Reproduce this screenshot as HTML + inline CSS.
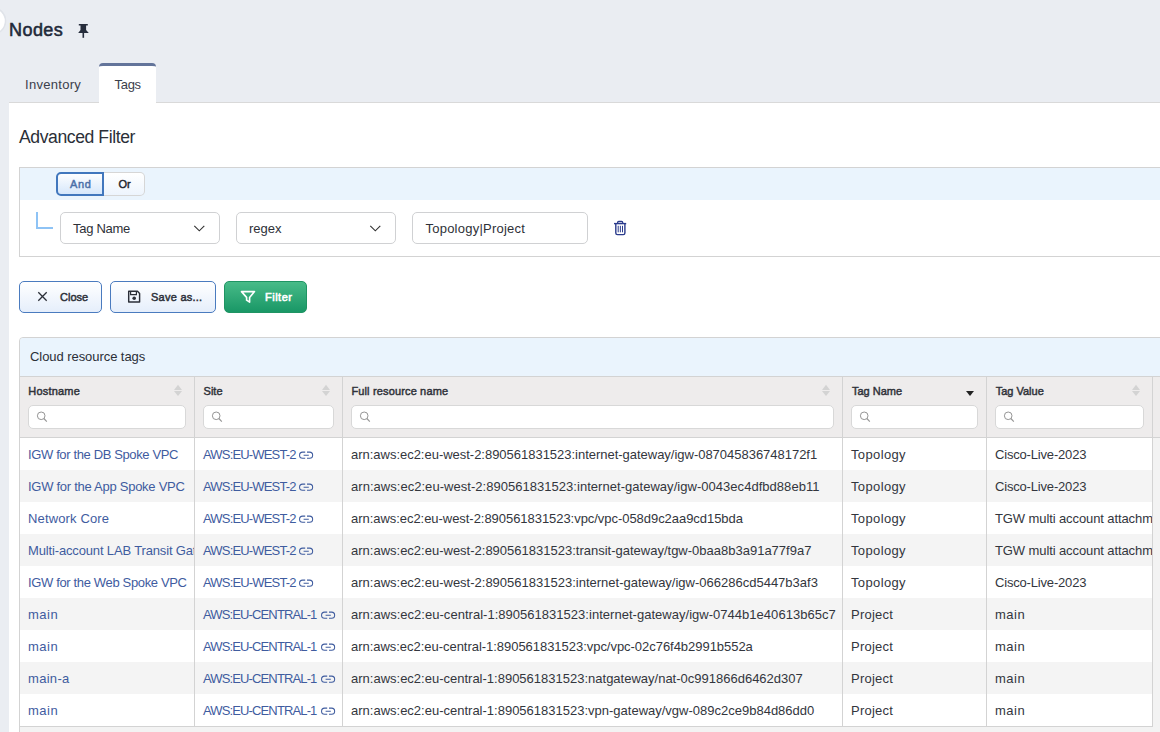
<!DOCTYPE html>
<html><head><meta charset="utf-8">
<style>
*{box-sizing:border-box;margin:0;padding:0}
html,body{width:1160px;height:732px;overflow:hidden;background:#eaedf2;font-family:"Liberation Sans",sans-serif;color:#333}
.abs{position:absolute}
.t{position:absolute;white-space:pre;line-height:normal}
#title{left:9px;top:20px;font-size:18px;font-weight:400;color:#222939;letter-spacing:0.45px;-webkit-text-stroke:0.55px #222939}
#tab2{left:99px;top:63px;width:57px;height:40px;background:#fff;border-top:3px solid #63749a;border-radius:4px 4px 0 0}
#panel{left:9px;top:102px;width:1151px;height:630px;background:#fff;border-top:1px solid #d9d9d9}
#fbox{left:19px;top:167px;width:1160px;height:90px;border:1px solid #d3d3d3;background:#fff}
#fhead{left:20px;top:168px;width:1140px;height:32px;background:#eaf4fd}
#and{left:56px;top:172px;width:48px;height:24px;border:2px solid #4177bd;border-radius:5px 0 0 5px;background:linear-gradient(#fdfeff,#d6e7fb)}
#or{left:104px;top:172px;width:41px;height:24px;border:1px solid #d6d6d6;border-left:none;border-radius:0 5px 5px 0;background:linear-gradient(#ffffff,#edf4fd)}
.seg{font-size:11px;font-weight:400;-webkit-text-stroke:0.45px currentColor}
#conn{left:36px;top:212px;width:17px;height:17px;border-left:2px solid #8ec3f5;border-bottom:2px solid #8ec3f5}
.sel{height:32px;top:212px;border:1px solid #d0d1d3;border-radius:5px;background:#fff}
.ft{font-size:13px;color:#2e3138}
.btn{top:281px;height:32px;border:1px solid #4a7bbf;border-radius:5px;background:linear-gradient(#ffffff,#e5eefb)}
.bt{font-size:11px;font-weight:400;-webkit-text-stroke:0.45px currentColor;color:#2b2f38;top:291px}
#bfilter{border-color:#1f9463;background:linear-gradient(#48bb88,#199766)}
#tpanel{left:19px;top:337px;width:1150px;height:400px;border:1px solid #d3d3d3;border-radius:4px 0 0 0;background:#f3f3f3;overflow:hidden}
#thead{left:0;top:0;width:100%;height:39px;background:#eaf4fd;border-bottom:1px solid #d3d3d3}
table{position:absolute;left:-1px;top:39px;border-collapse:collapse;table-layout:fixed;width:1155px}
th{background:#eeecec;height:60px;border:1px solid #d3d3d3;border-top:none;padding:0}
td{height:32px;border-left:1px solid #d3d3d3;border-right:1px solid #d3d3d3;font-size:13px;color:#33363d;padding:0 0 0 8px;white-space:nowrap;overflow:hidden;background:#fff;vertical-align:middle}
tr.g td{background:#f4f4f4}
tr.r1 td{height:33px;padding-top:1px}
td a{color:#3f5c9f;text-decoration:none}
td.x{background:#f3f3f3 !important;border-right:none}
.hl{font-size:11px;font-weight:400;-webkit-text-stroke:0.45px #2f3239;color:#2f3239;top:385px}
.sb{top:405px;height:24px;background:#fff;border:1px solid #d8d8d8;border-radius:5px}
</style></head><body>
<svg class="abs" style="left:0;top:0" width="10" height="40" viewBox="0 0 10 40"><circle cx="-7.7" cy="20.9" r="13.2" fill="none" stroke="rgba(40,50,70,0.05)" stroke-width="1.6"/><circle cx="-7.7" cy="20.9" r="12.4" fill="#fff"/></svg>
<div id="title" class="t">Nodes</div>
<svg class="abs" style="left:70px;top:18px" width="24" height="24" viewBox="70 18 24 24"><path d="M78.8 23.9H87.8V25.4H86.1V30L88.8 32.9H78.2L80.5 30V25.4H78.8Z" fill="#262d3c"/><rect x="82.5" y="32.5" width="1.6" height="5.3" fill="#262d3c"/></svg>
<div class="t" style="left:25px;top:77px;font-size:13px;color:#3b404c;letter-spacing:0.3px">Inventory</div>
<div id="panel" class="abs"></div>
<div id="tab2" class="abs"></div>
<div class="t" style="left:114.5px;top:77px;font-size:13px;color:#3b404c;letter-spacing:-0.3px">Tags</div>
<div class="t" style="left:19px;top:126.5px;font-size:17.6px;color:#2b2f38;letter-spacing:-0.42px">Advanced Filter</div>

<div id="fbox" class="abs"></div>
<div id="fhead" class="abs"></div>
<div id="and" class="abs"></div>
<div id="or" class="abs"></div>
<div class="t seg" style="left:70px;top:178px;color:#4a6fa8;letter-spacing:0.6px">And</div>
<div class="t seg" style="left:118.5px;top:178px;color:#23262d">Or</div>
<div id="conn" class="abs"></div>
<div class="abs sel" style="left:60px;width:160px"></div>
<div class="abs sel" style="left:236px;width:160px"></div>
<div class="abs sel" style="left:412px;width:176px"></div>
<div class="t ft" style="left:73px;top:221px;letter-spacing:-0.29px">Tag Name</div>
<div class="t ft" style="left:249px;top:221px">regex</div>
<div class="t ft" style="left:425.5px;top:221px;letter-spacing:0.23px">Topology|Project</div>
<svg class="abs" style="left:180px;top:215px" width="220" height="20" viewBox="180 215 220 20"><path d="M194.3 225.8L199.3 230.8L204.3 225.8" stroke="#333" stroke-width="1.15" fill="none"/><path d="M370.3 225.8L375.3 230.8L380.3 225.8" stroke="#333" stroke-width="1.15" fill="none"/></svg>
<svg class="abs" style="left:606px;top:214px" width="30" height="28" viewBox="606 214 30 28"><path d="M614 223.6H626.2" stroke="#2a3b8c" stroke-width="1.4"/><path d="M617.6 223.6V222.6Q617.6 221.5 618.7 221.5H621.6Q622.7 221.5 622.7 222.6V223.6" stroke="#2a3b8c" stroke-width="1.3" fill="none"/><path d="M615.8 223.6V232.9Q615.8 234.6 617.5 234.6H623.2Q624.9 234.6 624.9 232.9V223.6" stroke="#2a3b8c" stroke-width="1.4" fill="none"/><path d="M618.2 225.8V232.3M620.35 225.8V232.3M622.5 225.8V232.3" stroke="#2a3b8c" stroke-width="1"/></svg>

<div class="abs btn" style="left:19px;width:83px"></div>
<div class="abs btn" style="left:110px;width:106px"></div>
<div id="bfilter" class="abs btn" style="left:224px;width:83px"></div>
<svg class="abs" style="left:19px;top:281px" width="290" height="32" viewBox="19 281 290 32">
<path d="M38.3 292.3L46.7 300.7M46.7 292.3L38.3 300.7" stroke="#2b2f38" stroke-width="1.3"/>
<path d="M128.7 291.3H137.5L139.6 293.4V301.9H128.7Z" stroke="#2b2f38" stroke-width="1.45" fill="none" stroke-linejoin="round"/>
<path d="M130.6 291.3V294.6H136.4V291.3" stroke="#2b2f38" stroke-width="1.2" fill="none"/>
<circle cx="134.2" cy="298.2" r="1.8" fill="#2b2f38"/>
<path d="M241.5 291.6H254.5L249.6 297.4V302.2L246.6 300.2V297.4Z" stroke="#fff" stroke-width="1.6" fill="none" stroke-linejoin="round"/>
</svg>
<div class="t bt" style="left:60px;letter-spacing:0px">Close</div>
<div class="t bt" style="left:151px;letter-spacing:0.25px">Save as...</div>
<div class="t bt" style="left:265px;color:#fff;letter-spacing:0.5px;-webkit-text-stroke:0.6px #fff">Filter</div>

<div id="tpanel" class="abs">
  <div id="thead" class="abs"></div>
  <table>
    <colgroup><col style="width:175px"><col style="width:148px"><col style="width:500px"><col style="width:144px"><col style="width:166px"><col style="width:22px"></colgroup>
    <tr><th></th><th></th><th></th><th></th><th></th><th style="border-right:none"></th></tr>
    <tr class="r1"><td><a style="letter-spacing:-0.37px">IGW for the DB Spoke VPC</a></td><td><a style="letter-spacing:-0.83px">AWS:EU-WEST-2</a><svg style="position:relative;left:3px;top:0px;vertical-align:-1px" width="15" height="9" viewBox="0 0 15 9"><path d="M6.2 1.1H3.6A3.05 3.05 0 0 0 3.6 7.2H6.2M8 1.1H10.6A3.05 3.05 0 0 1 10.6 7.2H8M4.6 4.15H9.8" stroke="#3f5c9f" stroke-width="1.05" fill="none"/></svg></td><td><span style="letter-spacing:-0.02px">arn:aws:ec2:eu-west-2:890561831523:internet-gateway/igw-087045836748172f1</span></td><td><span style="letter-spacing:0.36px">Topology</span></td><td><span style="letter-spacing:-0.18px">Cisco-Live-2023</span></td><td class="x"></td></tr>
<tr class="g"><td><a style="letter-spacing:-0.27px">IGW for the App Spoke VPC</a></td><td><a style="letter-spacing:-0.83px">AWS:EU-WEST-2</a><svg style="position:relative;left:3px;top:0px;vertical-align:-1px" width="15" height="9" viewBox="0 0 15 9"><path d="M6.2 1.1H3.6A3.05 3.05 0 0 0 3.6 7.2H6.2M8 1.1H10.6A3.05 3.05 0 0 1 10.6 7.2H8M4.6 4.15H9.8" stroke="#3f5c9f" stroke-width="1.05" fill="none"/></svg></td><td><span style="letter-spacing:0.035px">arn:aws:ec2:eu-west-2:890561831523:internet-gateway/igw-0043ec4dfbd88eb11</span></td><td><span style="letter-spacing:0.36px">Topology</span></td><td><span style="letter-spacing:-0.18px">Cisco-Live-2023</span></td><td class="x"></td></tr>
<tr><td><a style="letter-spacing:0.14px">Network Core</a></td><td><a style="letter-spacing:-0.83px">AWS:EU-WEST-2</a><svg style="position:relative;left:3px;top:0px;vertical-align:-1px" width="15" height="9" viewBox="0 0 15 9"><path d="M6.2 1.1H3.6A3.05 3.05 0 0 0 3.6 7.2H6.2M8 1.1H10.6A3.05 3.05 0 0 1 10.6 7.2H8M4.6 4.15H9.8" stroke="#3f5c9f" stroke-width="1.05" fill="none"/></svg></td><td><span style="letter-spacing:-0.045px">arn:aws:ec2:eu-west-2:890561831523:vpc/vpc-058d9c2aa9cd15bda</span></td><td><span style="letter-spacing:0.36px">Topology</span></td><td><span style="letter-spacing:-0.1px">TGW multi account attachment</span></td><td class="x"></td></tr>
<tr class="g"><td><a style="letter-spacing:-0.15px">Multi-account LAB Transit Gateway</a></td><td><a style="letter-spacing:-0.83px">AWS:EU-WEST-2</a><svg style="position:relative;left:3px;top:0px;vertical-align:-1px" width="15" height="9" viewBox="0 0 15 9"><path d="M6.2 1.1H3.6A3.05 3.05 0 0 0 3.6 7.2H6.2M8 1.1H10.6A3.05 3.05 0 0 1 10.6 7.2H8M4.6 4.15H9.8" stroke="#3f5c9f" stroke-width="1.05" fill="none"/></svg></td><td><span>arn:aws:ec2:eu-west-2:890561831523:transit-gateway/tgw-0baa8b3a91a77f9a7</span></td><td><span style="letter-spacing:0.36px">Topology</span></td><td><span style="letter-spacing:-0.1px">TGW multi account attachment</span></td><td class="x"></td></tr>
<tr><td><a style="letter-spacing:-0.35px">IGW for the Web Spoke VPC</a></td><td><a style="letter-spacing:-0.83px">AWS:EU-WEST-2</a><svg style="position:relative;left:3px;top:0px;vertical-align:-1px" width="15" height="9" viewBox="0 0 15 9"><path d="M6.2 1.1H3.6A3.05 3.05 0 0 0 3.6 7.2H6.2M8 1.1H10.6A3.05 3.05 0 0 1 10.6 7.2H8M4.6 4.15H9.8" stroke="#3f5c9f" stroke-width="1.05" fill="none"/></svg></td><td><span>arn:aws:ec2:eu-west-2:890561831523:internet-gateway/igw-066286cd5447b3af3</span></td><td><span style="letter-spacing:0.36px">Topology</span></td><td><span style="letter-spacing:-0.18px">Cisco-Live-2023</span></td><td class="x"></td></tr>
<tr class="g"><td><a style="letter-spacing:0.5px">main</a></td><td><a style="letter-spacing:-0.87px">AWS:EU-CENTRAL-1</a><svg style="position:relative;left:5px;top:0px;vertical-align:-1px" width="15" height="9" viewBox="0 0 15 9"><path d="M6.2 1.1H3.6A3.05 3.05 0 0 0 3.6 7.2H6.2M8 1.1H10.6A3.05 3.05 0 0 1 10.6 7.2H8M4.6 4.15H9.8" stroke="#3f5c9f" stroke-width="1.05" fill="none"/></svg></td><td><span style="letter-spacing:0.025px">arn:aws:ec2:eu-central-1:890561831523:internet-gateway/igw-0744b1e40613b65c7</span></td><td><span style="letter-spacing:0.25px">Project</span></td><td><span style="letter-spacing:0.5px">main</span></td><td class="x"></td></tr>
<tr><td><a style="letter-spacing:0.5px">main</a></td><td><a style="letter-spacing:-0.87px">AWS:EU-CENTRAL-1</a><svg style="position:relative;left:5px;top:0px;vertical-align:-1px" width="15" height="9" viewBox="0 0 15 9"><path d="M6.2 1.1H3.6A3.05 3.05 0 0 0 3.6 7.2H6.2M8 1.1H10.6A3.05 3.05 0 0 1 10.6 7.2H8M4.6 4.15H9.8" stroke="#3f5c9f" stroke-width="1.05" fill="none"/></svg></td><td><span style="letter-spacing:-0.035px">arn:aws:ec2:eu-central-1:890561831523:vpc/vpc-02c76f4b2991b552a</span></td><td><span style="letter-spacing:0.25px">Project</span></td><td><span style="letter-spacing:0.5px">main</span></td><td class="x"></td></tr>
<tr class="g"><td><a style="letter-spacing:0.3px">main-a</a></td><td><a style="letter-spacing:-0.87px">AWS:EU-CENTRAL-1</a><svg style="position:relative;left:5px;top:0px;vertical-align:-1px" width="15" height="9" viewBox="0 0 15 9"><path d="M6.2 1.1H3.6A3.05 3.05 0 0 0 3.6 7.2H6.2M8 1.1H10.6A3.05 3.05 0 0 1 10.6 7.2H8M4.6 4.15H9.8" stroke="#3f5c9f" stroke-width="1.05" fill="none"/></svg></td><td><span>arn:aws:ec2:eu-central-1:890561831523:natgateway/nat-0c991866d6462d307</span></td><td><span style="letter-spacing:0.25px">Project</span></td><td><span style="letter-spacing:0.5px">main</span></td><td class="x"></td></tr>
<tr><td><a style="letter-spacing:0.5px">main</a></td><td><a style="letter-spacing:-0.87px">AWS:EU-CENTRAL-1</a><svg style="position:relative;left:5px;top:0px;vertical-align:-1px" width="15" height="9" viewBox="0 0 15 9"><path d="M6.2 1.1H3.6A3.05 3.05 0 0 0 3.6 7.2H6.2M8 1.1H10.6A3.05 3.05 0 0 1 10.6 7.2H8M4.6 4.15H9.8" stroke="#3f5c9f" stroke-width="1.05" fill="none"/></svg></td><td><span>arn:aws:ec2:eu-central-1:890561831523:vpn-gateway/vgw-089c2ce9b84d86dd0</span></td><td><span style="letter-spacing:0.25px">Project</span></td><td><span style="letter-spacing:0.5px">main</span></td><td class="x"></td></tr>
  </table>
  <div class="abs" style="left:0;top:388px;width:1133px;height:1px;background:#d3d3d3"></div>
</div>
<div class="t" style="left:30px;top:349px;font-size:13px;color:#2b2f38;letter-spacing:-0.06px">Cloud resource tags</div>
<div class="t hl" style="left:28.3px;letter-spacing:0.2px">Hostname</div>
<div class="t hl" style="left:203.6px;letter-spacing:0px">Site</div>
<div class="t hl" style="left:351.4px;letter-spacing:0.15px">Full resource name</div>
<div class="t hl" style="left:851.9px;letter-spacing:0px">Tag Name</div>
<div class="t hl" style="left:995.7px;letter-spacing:0px">Tag Value</div>
<div class="abs sb" style="left:28px;width:158px"></div>
<div class="abs sb" style="left:203px;width:131px"></div>
<div class="abs sb" style="left:351px;width:483px"></div>
<div class="abs sb" style="left:851px;width:127px"></div>
<div class="abs sb" style="left:995px;width:149px"></div>
<svg class="abs" style="left:0;top:380px" width="1160" height="50" viewBox="0 380 1160 50">
<path d="M178 384.8L182 389.9H174Z M174 391H182L178 396Z" fill="#d3d3d3"/>
<path d="M326 384.8L330 389.9H322Z M322 391H330L326 396Z" fill="#d3d3d3"/>
<path d="M826 384.8L830 389.9H822Z M822 391H830L826 396Z" fill="#d3d3d3"/>
<path d="M1136 384.8L1140 389.9H1132Z M1132 391H1140L1136 396Z" fill="#d3d3d3"/>
<path d="M966 391H974L970 396Z" fill="#222"/>
<circle cx="41.2" cy="415.8" r="3.8" stroke="#959595" stroke-width="1.0" fill="none"/><path d="M43.900000000000006 418.5L46.800000000000004 421.6" stroke="#959595" stroke-width="1.1"/>
<circle cx="216.2" cy="415.8" r="3.8" stroke="#959595" stroke-width="1.0" fill="none"/><path d="M218.89999999999998 418.5L221.79999999999998 421.6" stroke="#959595" stroke-width="1.1"/>
<circle cx="364.2" cy="415.8" r="3.8" stroke="#959595" stroke-width="1.0" fill="none"/><path d="M366.9 418.5L369.8 421.6" stroke="#959595" stroke-width="1.1"/>
<circle cx="864.2" cy="415.8" r="3.8" stroke="#959595" stroke-width="1.0" fill="none"/><path d="M866.9000000000001 418.5L869.8000000000001 421.6" stroke="#959595" stroke-width="1.1"/>
<circle cx="1008.2" cy="415.8" r="3.8" stroke="#959595" stroke-width="1.0" fill="none"/><path d="M1010.9000000000001 418.5L1013.8000000000001 421.6" stroke="#959595" stroke-width="1.1"/>
</svg>
</body></html>
